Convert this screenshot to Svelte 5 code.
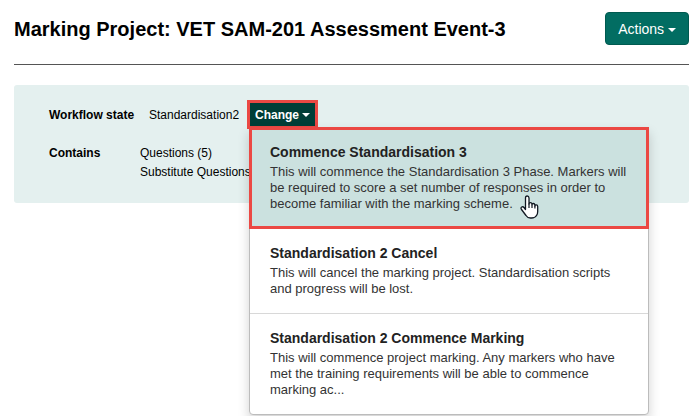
<script>
  const items = [
    {
      title: 'Commence Standardisation 3',
      text: 'This will commence the Standardisation 3 Phase. Markers will be required to score a set number of responses in order to become familiar with the marking scheme.'
    },
    {
      title: 'Standardisation 2 Cancel',
      text: 'This will cancel the marking project. Standardisation scripts and progress will be lost.'
    },
    {
      title: 'Standardisation 2 Commence Marking',
      text: 'This will commence project marking. Any markers who have met the training requirements will be able to commence marking ac...'
    }
  ];
  let open = $state(true);
  let active = $state(0);
</script>

<main>
  <header>
    <h1>Marking Project: VET SAM-201 Assessment Event-3</h1>
    <button class="actions" type="button">Actions <span class="caret"></span></button>
  </header>

  <section class="panel">
    <div class="row state">
      <strong>Workflow state</strong>
      <span>Standardisation2</span>
      <div class="dropdown">
        <button class="change" type="button" aria-expanded={open} onclick={() => (open = !open)}>
          Change <span class="caret"></span>
        </button>
        {#if open}
          <ul class="menu">
            {#each items as item, i}
              <li>
                <button
                  type="button"
                  class="item"
                  class:active={i === active}
                  onmouseenter={() => (active = i)}
                >
                  <span class="title">{item.title}</span>
                  <span class="text">{item.text}</span>
                </button>
              </li>
            {/each}
          </ul>
          <svg class="pointer" width="19" height="24" viewBox="0 0 19 24" aria-hidden="true">
            <path
              d="M5.5 14.5V3Q5.5 1 7.2 1T9 3V9Q9 7.6 10.4 7.6T12 9V9.8Q12 8.4 13.3 8.5T14.9 10V11Q15 9.8 16.3 9.9T17.7 11.5V16.5Q17.7 19 16.5 20.5Q15 23 11.5 23H10.5Q7.5 23 6 20.5L1.5 14.5Q.4 12.7 1.7 12T4 12.5Z"
              fill="#fff" stroke="#111822" stroke-width="1.3" stroke-linejoin="round"
            />
            <path d="M9 8.5V13M12 9.5V13M14.9 10.8V13.5" fill="none" stroke="#111822" stroke-width="1.2" />
          </svg>
        {/if}
      </div>
    </div>
    <div class="row contains">
      <strong>Contains</strong>
      <div class="links">
        <span>Questions (5)</span>
        <span>Substitute Questions</span>
      </div>
    </div>
  </section>
</main>

<style>
  :global(body) {
    background: #fff;
  }
  main {
    box-sizing: border-box;
    min-height: 100vh;
    padding: 12px 6px 0 14px;
    font-family: "Liberation Sans", Arial, sans-serif;
    font-size: 12px;
    line-height: 19px;
    color: #000;
  }
  header {
    display: flex;
    justify-content: space-between;
    align-items: center;
    height: 33px;
    padding-bottom: 19px;
    border-bottom: 1px solid #555;
  }
  h1 {
    margin: 0;
    font-size: 20px;
    line-height: 32px;
    color: #000;
    white-space: nowrap;
  }
  button {
    font-family: inherit;
    cursor: pointer;
  }
  .caret {
    display: inline-block;
    border: 4px solid transparent;
    border-top-color: #fff;
    border-bottom: 0;
    vertical-align: middle;
  }
  .actions {
    padding: 0 12px;
    height: 33px;
    border: 1px solid #005a50;
    border-radius: 4px;
    background: #026d62;
    color: #fff;
    font-size: 14px;
    white-space: nowrap;
  }
  .panel {
    margin-top: 20px;
    padding: 15px 35px 21px;
    border-radius: 3px;
    background: #e4f0ef;
  }
  .row {
    display: flex;
  }
  .state {
    align-items: baseline;
    height: 29px;
  }
  .state > strong {
    width: 100px;
  }
  .state > span {
    width: 98px;
  }
  .contains {
    margin-top: 15px;
  }
  .contains > strong {
    width: 91px;
  }
  .links {
    display: flex;
    flex-direction: column;
  }
  .dropdown {
    position: relative;
  }
  .change {
    display: block;
    height: 29px;
    padding: 0 5px;
    border: 3px solid #eb4843;
    background: #013e37;
    color: #fff;
    font-size: 12px;
    font-weight: bold;
    white-space: nowrap;
  }
  .menu {
    position: absolute;
    top: 27px;
    left: 2px;
    box-sizing: border-box;
    width: 400px;
    margin: 0;
    padding: 0;
    list-style: none;
    border: 1px solid #bcbcbc;
    border-radius: 0 0 4px 4px;
    background: #fff;
    box-shadow: 0 6px 12px rgba(0, 0, 0, 0.18);
  }
  li + li {
    border-top: 1px solid #d8d8d8;
  }
  .item {
    display: block;
    width: 100%;
    padding: 14px 20px 16px;
    border: 0;
    background: transparent;
    color: #333;
    text-align: left;
  }
  .item.active {
    background: #cbe1df;
    outline: 3px solid #eb4843;
    outline-offset: -2px;
  }
  .title,
  .text {
    display: block;
  }
  .title {
    margin-bottom: 2px;
    font-size: 14px;
    font-weight: bold;
    line-height: 20px;
    color: #222;
  }
  .text {
    font-size: 13px;
    line-height: 16px;
  }
  .pointer {
    position: absolute;
    top: 95px;
    left: 273px;
  }
</style>
